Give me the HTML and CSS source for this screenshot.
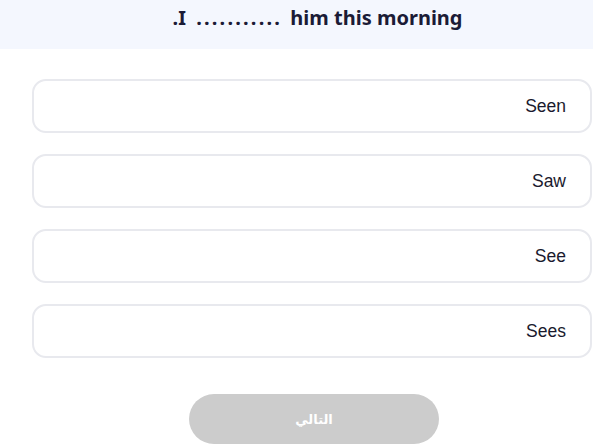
FILE: index.html
```html
<!DOCTYPE html>
<html lang="ar" dir="rtl">
<head>
<meta charset="utf-8">
<link rel="stylesheet" href="styles.css">
</head>
<body>
<div class="page">
  <header class="question">
    <h1 class="question-text"><span>I</span> <span class="blank">...........</span> <span>him this morning</span><span>.</span></h1>
  </header>
  <main class="content">
    <ul class="options">
      <li class="option">Seen</li>
      <li class="option">Saw</li>
      <li class="option">See</li>
      <li class="option">Sees</li>
    </ul>
    <div class="actions">
      <button class="next-btn" disabled>التالي</button>
    </div>
  </main>
</div>
</body>
</html>
```

FILE: styles.css
```css
* { box-sizing: border-box; }
html, body { margin: 0; padding: 0; background: #ffffff; }
body { font-family: "Liberation Sans", Arial, sans-serif; }
.page { width: 593px; }
.question {
  background: #f4f7fe;
  height: 49px;
  display: flex;
  align-items: center;
  justify-content: center;
  padding-left: 42px;
  padding-bottom: 14px;
}
.question-text {
  margin: 0;
  font-family: "Noto Sans", "Open Sans", sans-serif;
  font-weight: 700;
  font-size: 20px;
  color: #1b1b36;
  line-height: 1;
}
.blank {
  display: inline-block;
  letter-spacing: 2.2px;
  margin-left: 5px;
  margin-right: 3px;
}
.content {
  padding: 30px 1px 0 32px;
}
.options {
  list-style: none;
  margin: 0;
  padding: 0;
  display: flex;
  flex-direction: column;
  gap: 21px;
}
.option {
  height: 54px;
  border: 2px solid #e8e9ee;
  border-radius: 14px;
  display: flex;
  align-items: center;
  padding: 0 24px;
  font-size: 17.5px;
  color: #1a1a2e;
}
.actions {
  display: flex;
  justify-content: center;
  padding-top: 36px;
  padding-left: 4px;
}
.next-btn {
  width: 250px;
  height: 50px;
  border: none;
  border-radius: 25px;
  background: #cccccc;
  color: #ffffff;
  font-family: "DejaVu Sans", sans-serif;
  font-weight: 700;
  font-size: 13px;
  cursor: default;
}
```
